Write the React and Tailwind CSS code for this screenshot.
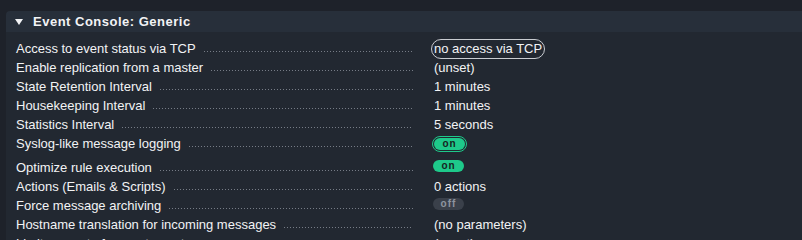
import React from 'react'

const rows = [
  { label: 'Access to event status via TCP', value: { kind: 'pill', text: 'no access via TCP' } },
  { label: 'Enable replication from a master', value: { kind: 'text', text: '(unset)' } },
  { label: 'State Retention Interval', value: { kind: 'text', text: '1 minutes' } },
  { label: 'Housekeeping Interval', value: { kind: 'text', text: '1 minutes' } },
  { label: 'Statistics Interval', value: { kind: 'text', text: '5 seconds' } },
  { label: 'Syslog-like message logging', value: { kind: 'on', ring: true }, h: 'h-[24px]' },
  { label: 'Optimize rule execution', value: { kind: 'on' } },
  { label: 'Actions (Emails & Scripts)', value: { kind: 'text', text: '0 actions' } },
  { label: 'Force message archiving', value: { kind: 'off' } },
  { label: 'Hostname translation for incoming messages', value: { kind: 'text', text: '(no parameters)' } },
  { label: 'Limit amount of current events', value: { kind: 'text', text: '(unset)' } },
]

function Toggle({ on }) {
  return (
    <span
      className={`flex items-center justify-center w-[31px] h-[12px] rounded-full text-[10px] font-bold leading-none tracking-[1px] ${
        on ? 'bg-[#1ec98a] text-[#16241e]' : 'bg-[#3a404a] text-[#8e959f]'
      }`}
    >
      {on ? 'on' : 'off'}
    </span>
  )
}

function Value({ value }) {
  if (value.kind === 'pill') {
    return (
      <span className="inline-flex items-center h-[20px] px-[2px] -ml-px rounded-full border border-[#c9ccd1] leading-[18px]">
        {value.text}
      </span>
    )
  }
  if (value.kind === 'on' || value.kind === 'off') {
    const t = <Toggle on={value.kind === 'on'} />
    if (value.ring) {
      return (
        <span className="inline-flex mt-[2px] rounded-full border-[1.5px] border-[#1ec98a] p-px">
          {t}
        </span>
      )
    }
    return <span className="inline-flex mt-[2px] ml-px">{t}</span>
  }
  return <span className="block leading-[19px] ml-[2px]">{value.text}</span>
}

export default function App() {
  return (
    <div
      className="w-[802px] h-[240px] overflow-hidden bg-[#1e222a] pt-[11px] pl-[6px] text-[#f2f3f5]"
      style={{ fontFamily: '"Liberation Sans", Arial, sans-serif' }}
    >
      <div className="rounded-tl-[4px] overflow-hidden">
        {/* Header */}
        <div className="flex items-center h-[21px] bg-[#272f3a] pl-[9px]">
          <svg width="8" height="6" viewBox="0 0 8 6" className="mt-px">
            <polygon points="0,0 8,0 4,6" fill="#f2f3f5" />
          </svg>
          <span className="ml-[10px] text-[13px] font-bold tracking-[0.5px]">Event Console: Generic</span>
        </div>

        {/* Body */}
        <div className="bg-[#222831] pt-[7px] pl-[10px] text-[13px]">
          {rows.map((r) => (
            <div key={r.label} className={`flex items-start ${r.h || 'h-[19px]'}`}>
              <div className="flex items-start w-[416px] shrink-0 pr-[19px]">
                <span className="leading-[19px] whitespace-nowrap">{r.label}</span>
                <div className="flex-1 ml-[8px] mt-[12px] h-px bg-[repeating-linear-gradient(to_right,#767c86_0_1px,transparent_1px_3px)]" />
              </div>
              <div className="flex items-start">
                <Value value={r.value} />
              </div>
            </div>
          ))}
        </div>
      </div>
    </div>
  )
}
